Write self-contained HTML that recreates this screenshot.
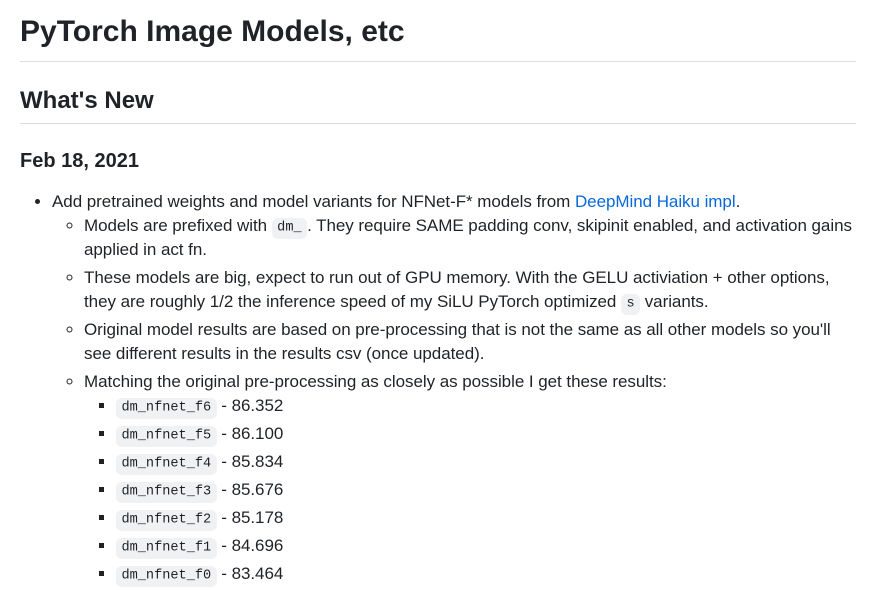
<!DOCTYPE html>
<html><head><meta charset="utf-8"><style>
html,body{margin:0;padding:0;background:#fff;}
*{box-sizing:border-box;}
body{width:883px;height:590px;overflow:hidden;position:relative;font-family:"Liberation Sans",Helvetica,Arial,sans-serif;color:#1f2328;font-size:17px;line-height:24px;}
.h{position:absolute;left:20px;width:836px;font-weight:600;margin:0;}
h1.h{top:12px;font-size:30px;line-height:40px;padding-bottom:9px;border-bottom:1px solid #d8dee4;height:50px;}
h2.h{top:86px;font-size:24px;line-height:30px;padding-bottom:7px;border-bottom:1px solid #d8dee4;height:38px;}
h3.h{top:149px;font-size:20px;line-height:25px;}
ul{margin:0;padding-left:32px;}
ul.top{position:absolute;left:20px;top:190px;width:842px;list-style:disc;letter-spacing:-0.05px;}
ul ul{list-style:circle;}
ul ul ul{list-style:square;}
li+li{margin-top:4px;}
code{font-family:"Liberation Mono",monospace;font-size:13.6px;line-height:1;padding:.2em .4em;background:rgba(175,184,193,0.2);border-radius:6px;letter-spacing:0;}
a{color:#0969da;text-decoration:none;}
</style></head><body>
<h1 class="h">PyTorch Image Models, etc</h1>
<h2 class="h">What's New</h2>
<h3 class="h">Feb 18, 2021</h3>
<ul class="top">
<li>Add pretrained weights and model variants for NFNet-F* models from <a>DeepMind Haiku impl</a>.
<ul>
<li>Models are prefixed with <code>dm_</code>. They require SAME padding conv, skipinit enabled, and activation gains applied in act fn.</li>
<li>These models are big, expect to run out of GPU memory. With the GELU activiation + other options, they are roughly 1/2 the inference speed of my SiLU PyTorch optimized <code>s</code> variants.</li>
<li>Original model results are based on pre-processing that is not the same as all other models so you'll see different results in the results csv (once updated).</li>
<li>Matching the original pre-processing as closely as possible I get these results:
<ul>
<li><code>dm_nfnet_f6</code> - 86.352</li>
<li><code>dm_nfnet_f5</code> - 86.100</li>
<li><code>dm_nfnet_f4</code> - 85.834</li>
<li><code>dm_nfnet_f3</code> - 85.676</li>
<li><code>dm_nfnet_f2</code> - 85.178</li>
<li><code>dm_nfnet_f1</code> - 84.696</li>
<li><code>dm_nfnet_f0</code> - 83.464</li>
</ul></li>
</ul></li>
</ul>
</body></html>
